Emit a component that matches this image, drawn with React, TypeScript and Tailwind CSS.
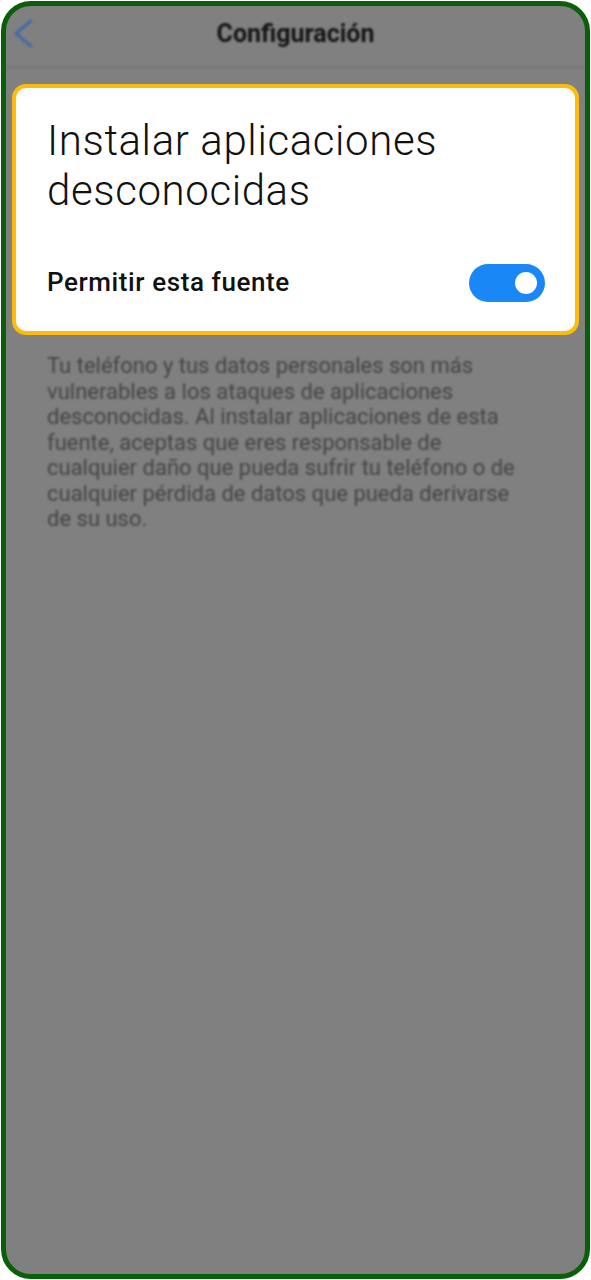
export default function App() {
  return (
    <div className="w-[591px] h-[1280px] bg-white p-[1px]">
      <div
        className="h-full rounded-[30px] border-[5px] border-[#0b5f0b] bg-[#808080] overflow-hidden flex flex-col"
        style={{ fontFamily: "Roboto, 'Noto Sans', sans-serif" }}
      >
        {/* Header (dimmed, blurred) */}
        <div className="h-[62px] shrink-0 border-b-2 border-[#777777] relative flex items-center justify-center pb-[4px] blur-[1.2px]">
          <svg
            className="absolute left-[6px] top-[12px]"
            width="26"
            height="32"
            viewBox="0 0 26 32"
            fill="none"
          >
            <path
              d="M19 3 L4 15.5 L19 28"
              stroke="#3f6ca6"
              strokeWidth="3"
              strokeLinecap="round"
              strokeLinejoin="round"
            />
          </svg>
          <span className="text-[25px] font-bold text-[#141414]">Configuración</span>
        </div>

        {/* Highlighted card */}
        <div className="mx-[6px] mt-[16px] rounded-[14px] border-4 border-[#fbbc0e] bg-white pl-[31px] pr-[30px] pt-[28px] pb-[29px]">
          <h1 className="text-[42px] font-light leading-[50px] text-[#111111] tracking-[0.6px]">
            Instalar aplicaciones desconocidas
          </h1>
          <div className="mt-[47px] flex items-center justify-between">
            <span className="text-[26px] font-medium text-[#111111] tracking-[0.6px]">Permitir esta fuente</span>
            <div className="w-[76px] h-[38px] rounded-full bg-[#1a87f7] flex items-center justify-end pr-[8px]">
              <div className="w-[22px] h-[22px] rounded-full bg-white" />
            </div>
          </div>
        </div>

        {/* Description (dimmed, blurred) */}
        <p className="mt-[18px] ml-[41px] w-[478px] text-[22px] leading-[25.5px] text-[#444444] blur-[1.2px]">
          Tu teléfono y tus datos personales son más vulnerables a los ataques de aplicaciones desconocidas. Al
          instalar aplicaciones de esta fuente, aceptas que eres responsable de cualquier daño que pueda sufrir tu
          teléfono o de cualquier pérdida de datos que pueda derivarse de su uso.
        </p>
      </div>
    </div>
  );
}
